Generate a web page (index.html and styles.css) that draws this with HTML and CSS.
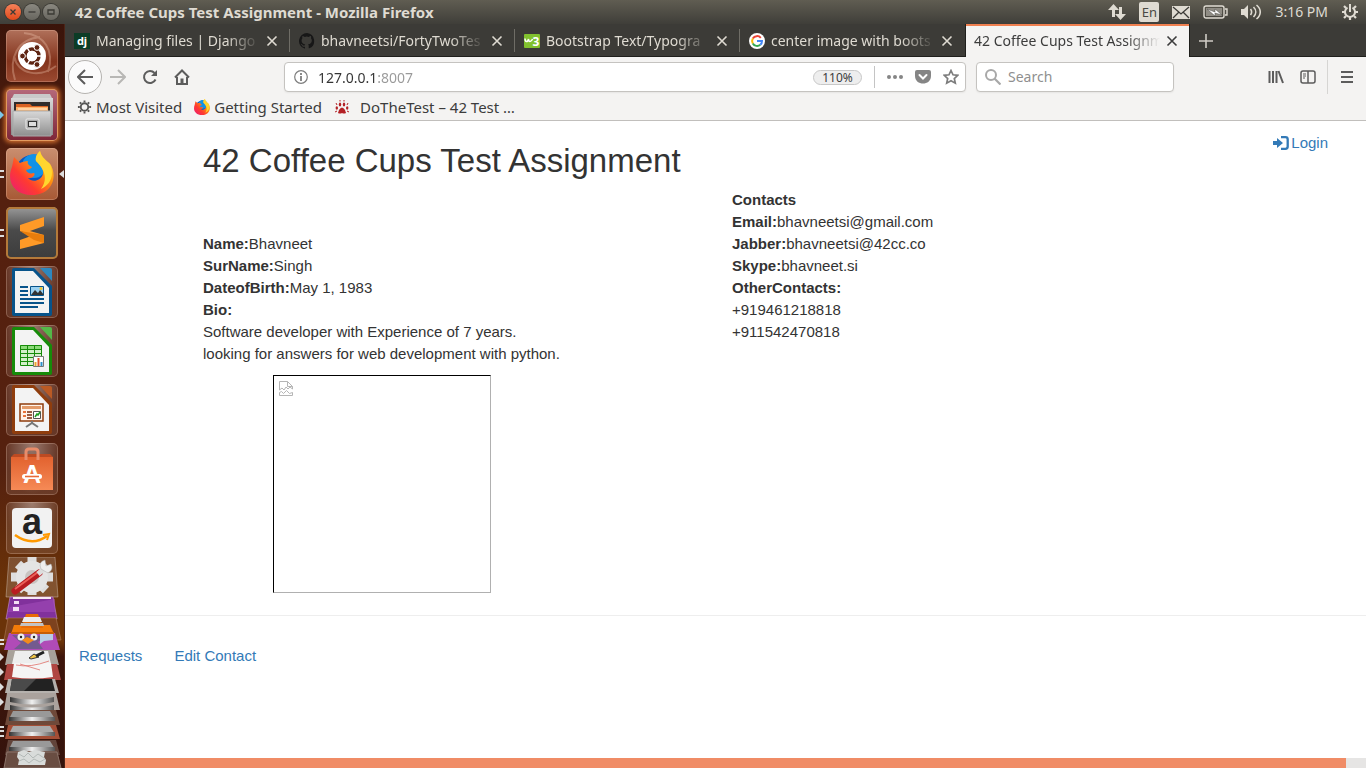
FILE: index.html
```html
<!DOCTYPE html>
<html lang="en">
<head>
<meta charset="utf-8">
<title>42 Coffee Cups Test Assignment</title>
<link rel="stylesheet" href="styles.css">
</head>
<body>
<svg class="defs" aria-hidden="true">
  <defs>
    <linearGradient id="steel" x2="0" y2="1"><stop offset="0" stop-color="#d8d8d8"/><stop offset="1" stop-color="#8e8e8e"/></linearGradient>
    <linearGradient id="drive" x2="1" y2="0"><stop offset="0" stop-color="#333"/><stop offset=".5" stop-color="#f0f0f0"/><stop offset="1" stop-color="#555"/></linearGradient>
    <linearGradient id="fire" x1="0" y1="1" x2="1" y2="0"><stop offset="0" stop-color="#e9187c"/><stop offset=".35" stop-color="#ff3b30"/><stop offset=".65" stop-color="#ff980e"/><stop offset="1" stop-color="#fff44f"/></linearGradient>
    <linearGradient id="bag" x2="0" y2="1"><stop offset="0" stop-color="#e2622f"/><stop offset="1" stop-color="#f68a56"/></linearGradient>
    <symbol id="fox" viewBox="0 0 44 44">
      <circle cx="22" cy="20" r="16" fill="#0a56c0"/><circle cx="24" cy="15" r="12" fill="#1192e8"/>
      <path d="M4 6L10 12C12 11 15 10 18 10 17 12 18 14 22 16 21 18 18 18 16 19 17 22 20 23 24 22 26 24 22 28 18 27 22 32 31 30 33 23 34 17 29 13 26 10 25 6 27 3 30 0 31 6 36 9 40 13 48 24 43 44 22 44 4 44-4 30 2 16Z" fill="url(#fire)"/>
      <path d="M26 10C25 6 27 3 30 0 31 6 36 9 40 13 45 25 40 34 31 38 38 28 35 19 26 10Z" fill="#ffd62e"/>
    </symbol>
    <symbol id="close" viewBox="0 0 12 12"><path d="M1.500 1.500l9 9m0-9l-9 9" fill="none" stroke="currentColor" stroke-width="1.600"/></symbol>
  </defs>
</svg>

<header class="panel">
  <div class="window-buttons">
    <button class="wb wb-close" aria-label="Close window"><svg viewBox="0 0 16 16"><path d="M5.500 5.500l5 5m0-5l-5 5"/></svg></button>
    <button class="wb" aria-label="Minimize"><svg viewBox="0 0 16 16"><path d="M4.500 8h7"/></svg></button>
    <button class="wb" aria-label="Restore"><svg viewBox="0 0 16 16"><path d="M5 6h6v4H5z"/></svg></button>
  </div>
  <div class="window-title">42 Coffee Cups Test Assignment - Mozilla Firefox</div>
  <div class="tray">
    <svg width="18" height="16" viewBox="0 0 18 16"><path d="M5.500 0L0 6h4v7h3V6h4zM12.500 16L18 10h-4V3h-3v7H7z" fill="#dfdbd2"/></svg>
    <span class="lang">En</span>
    <svg width="18" height="13" viewBox="0 0 18 13"><path d="M0 0h18v13H0z" fill="#dfdbd2"/><path d="M1 1l8 7 8-7M1 12l6-6m10 6l-6-6" fill="none" stroke="#3c3b37" stroke-width="1.300"/></svg>
    <svg width="25" height="14" viewBox="0 0 25 14"><rect x="1" y="1" width="20" height="12" rx="2" fill="none" stroke="#dfdbd2" stroke-width="1.400"/><path d="M3 3h16v8H3z" fill="#8f8c84"/><path d="M22 4h2v6h-2" fill="none" stroke="#dfdbd2" stroke-width="1.400"/><path d="M4 4l8 3V4l7 6-7-2v3z" fill="#fff" stroke="#4a4944" stroke-width=".5"/></svg>
    <svg width="21" height="16" viewBox="0 0 21 16"><path d="M0 5h3l4-4v14l-4-4H0z" fill="#dfdbd2"/><path d="M9.500 5c1.500 2 1.500 4 0 6M12.500 3c3 3 3 7 0 10M15.500 1c5 4 5 10 0 14" fill="none" stroke="#dfdbd2" stroke-width="1.600"/></svg>
    <time>3:16 PM</time>
    <svg width="18" height="18" viewBox="0 0 18 18" fill="none" stroke="#dfdbd2"><path d="M6.500 4.600a5 5 0 1 0 5 0" stroke-width="2"/><path d="M9 1v8" stroke-width="2"/><path d="M3 3l2 2M15 3l-2 2M1 9h3m10 0h3M3 15l2-2m10 2l-2-2M9 14v3" stroke-width="2.200"/></svg>
  </div>
</header>

<div class="desktop">
  <nav class="launcher" aria-label="Launcher">
    <button class="tile tile-dash" aria-label="Dash"><svg viewBox="0 0 52 52"><path d="M9 50C2 28 12 9 34 7M50 36C34 48 12 45 8 26M18 3C38 5 49 20 42 42" fill="none" stroke="#efc3ad" stroke-opacity=".35" stroke-width="2"/><circle cx="26" cy="26" r="14" fill="#fff"/><circle cx="26" cy="26" r="7" fill="none" stroke="#5e2412" stroke-width="3.400"/><path d="M26 26H38M26 26L20 15.600M26 26L20 36.400" stroke="#fff" stroke-width="1.500"/><circle cx="26" cy="26" r="5.200" fill="#fff"/><g fill="#5e2412" stroke="#fff"><circle cx="16.500" cy="26" r="2.900"/><circle cx="31" cy="17.500" r="2.900"/><circle cx="31" cy="34.500" r="2.900"/></g></svg></button>
    <button class="tile tile-files" aria-label="Files"><i class="mark mark-blue"></i><svg viewBox="0 0 52 52"><path d="M8 5h36l3 6v35H5V11z" fill="#c9c9c9"/><path d="M5 9h42v37H5z" fill="url(#steel)"/><path d="M8 13h36v10H8z" fill="#302c2b"/><path d="M10 15h14l2 2h16v6H10z" fill="#d96325"/><path d="M10 18h32v5H10z" fill="#ffb36b"/><path d="M12 20h29" stroke="#fff2dd"/><path d="M7 22h38v25H7z" fill="url(#steel)" stroke="#aaa"/><rect x="20" y="30" width="13" height="10" rx="1" fill="#aaa" stroke="#eee"/><rect x="22.500" y="32.500" width="8" height="5" fill="#ddd" stroke="#333"/></svg></button>
    <button class="tile tile-firefox" aria-label="Firefox"><i class="mark mark-pair"></i><i class="mark mark-active"></i><svg viewBox="0 0 52 52"><use href="#fox" x="4" y="3" width="44" height="44"/></svg></button>
    <button class="tile tile-sublime" aria-label="Sublime Text"><i class="mark mark-pair"></i><svg viewBox="0 0 52 52"><path d="M14 18l24-8v9l-14 5 14 4v8l-24 6v-9l14-5-14-4z" fill="#ff9a27"/><path d="M14 24l24 4v8l-10-3z" fill="#e87d0c"/></svg></button>
    <button class="tile" aria-label="Writer"><svg viewBox="0 0 52 52"><path d="M6 4q0-2 2-2h20l18 18v28q0 2-2 2H8q-2 0-2-2z" fill="#07538a"/><path d="M9 5h18l16 17v25H9z" fill="#f3f3f3"/><path d="M34 2h10q2 0 2 2v11z" fill="#2e88be"/><path d="M14 21h8M14 25h8M14 29h8M14 33h24M14 37h24M14 41h18" stroke="#07538a" stroke-width="2"/><path d="M24.500 20.500h13v9h-13z" fill="#9bd1f1" stroke="#07538a"/><path d="M25 29l4-5 3 3 2-3 4 5z" fill="#333"/><circle cx="35" cy="22.500" r="1.500" fill="#f2c52a"/></svg></button>
    <button class="tile" aria-label="Calc"><svg viewBox="0 0 52 52"><path d="M6 4q0-2 2-2h20l18 18v28q0 2-2 2H8q-2 0-2-2z" fill="#168b09"/><path d="M9 5h18l16 17v25H9z" fill="#f3f3f3"/><path d="M34 2h10q2 0 2 2v11z" fill="#54b848"/><path d="M14 20h22v20H14z" fill="#d2efc8"/><path d="M14 20h22v5H14z" fill="#8cdb79"/><path d="M14.500 20.500h21v20h-21zM14 24.500h22M14 28.500h22M14 32.500h22M14 36.500h22M21.500 20v20M28.500 20v20" fill="none" stroke="#168b09"/><path d="M27.500 31.500h10v10h-10z" fill="#fff" stroke="#777"/><path d="M29.500 41v-4" stroke="#eaa72e" stroke-width="2"/><path d="M32.500 41v-8" stroke="#df5026" stroke-width="2"/><path d="M35.500 41v-4" stroke="#2d91cc" stroke-width="2"/></svg></button>
    <button class="tile" aria-label="Impress"><svg viewBox="0 0 52 52"><path d="M6 3q0-2 2-2h20l18 18v29q0 2-2 2H8q-2 0-2-2z" fill="#8f3d0d"/><path d="M9 4h18l16 17v26H9z" fill="#f3f3f3"/><path d="M34 2h10q2 0 2 2v11z" fill="#bb5a24"/><path d="M14 20h23v17H14z" fill="#fff3e9" stroke="#8f3d0d" stroke-width="1.500"/><path d="M16 23.500h19" stroke="#e29a69" stroke-width="3"/><path d="M17 28h3m-3 4h3" stroke="#e77339" stroke-width="2"/><path d="M21 28h5m-5 3h5m-5 3h5" stroke="#762b0b" stroke-width="1.500"/><path d="M27.500 27.500h7v7h-7z" fill="#fff" stroke="#555"/><path d="M29 33l2-3 1 1 2-3" fill="none" stroke="#1b9c22" stroke-width="1.500"/><path d="M26 37v3m-6 3l6-4 6 4" fill="none" stroke="#777" stroke-width="2"/></svg></button>
    <button class="tile" aria-label="Software"><svg viewBox="0 0 52 52"><path d="M5 14h42v33H5z" fill="url(#bag)"/><path d="M5 14l3-3h36l3 3z" fill="#bc4a22"/><path d="M20 17V9q0-3 3-3h6q3 0 3 3v8" fill="none" stroke="#e88c6a" stroke-width="3"/><text x="26" y="40" class="bag-letter">A</text><path d="M18.500 33.500h15" stroke="#fff" stroke-width="5" stroke-linecap="round"/><path d="M19 33.500h14" stroke="#e96b37" stroke-width="1.600"/></svg></button>
    <button class="tile" aria-label="Amazon"><svg viewBox="0 0 52 52"><rect x="6" y="6" width="40" height="40" rx="4" fill="#f2f2f2"/><text x="26" y="32" class="amazon-letter">a</text><path d="M9 33q17 12 32 1" fill="none" stroke="#ff9900" stroke-width="2.600"/><path d="M37 33l6-1-2 6" fill="none" stroke="#ff9900" stroke-width="2"/></svg></button>
    <svg class="stack" viewBox="0 0 65 211" role="img" aria-label="More applications">
      <path d="M9 0h46l3 40H6z" fill="#fff" fill-opacity=".16" stroke="#fff" stroke-opacity=".3"/>
      <g transform="translate(32 20)"><g stroke="#dedede" stroke-width="9"><path d="M0-20V18M-21 0H21M-14-13L14 13M14-13L-14 13"/></g><circle r="16" fill="#e4e4e4"/><circle r="7" fill="#c9c4c2"/></g>
      <path d="M15 34L39 16" stroke="#b81c20" stroke-width="7" stroke-linecap="round"/><path d="M15 32L38 15" stroke="#ec5f58" stroke-width="2"/><path d="M38 17l7-6" stroke="#ddd" stroke-width="5"/><path d="M41 12q-3-7 4-9l1 6 5-2q3 6-3 9z" fill="#eee" stroke="#aaa" stroke-width=".5"/>
      <path d="M10 40h43l4 22H6z" fill="#81319c" stroke="#c893cf" stroke-opacity=".6"/><path d="M13 40h38v2H13z" fill="#f6e9f4"/><path d="M10 50L55 42v13H8z" fill="#a24bb9" fill-opacity=".6"/><path d="M14 44h5v3h-5zm-1 6h6v4h-6z" fill="#f3ddf4"/>
      <path d="M8 61h48l5 22H4z" fill="#7d421e" stroke="#b78764" stroke-opacity=".5"/>
      <path d="M9 76h46l5 17H4z" fill="#b04bb7"/><path d="M12 78l9 8-7 6h29l-5-7 7-6z" fill="#735a8f"/><path d="M40 77h13v6l-9 1-4 3z" fill="#b8cee4"/>
      <path d="M14 68h36l4 9H11z" fill="#f37b09"/><path d="M11 75h43v2H11z" fill="#c75e05"/><path d="M26 57h12l5 14H21z" fill="#e86b07"/><path d="M24 60h16l2 5H22z" fill="#ededed"/><path d="M21 66h22l1 3H20z" fill="#c3c3c3"/>
      <circle cx="21" cy="80" r="3.500" fill="#eee"/><circle cx="34" cy="80" r="3.500" fill="#eee"/><circle cx="21" cy="80" r="1.200" fill="#222"/><circle cx="34" cy="80" r="1.200" fill="#222"/><path d="M22 83l5-3 7 3-6 4z" fill="#f28b1d"/>
      <path d="M8 93h47l4 15H5z" fill="#a8a19a"/><path d="M15 94h33l3 13H12z" fill="#eee"/><path d="M29 101l5-4 5 3-8 2z" fill="#efc446" stroke="#333"/><path d="M36 99l8-4" stroke="#222" stroke-width="3"/>
      <path d="M7 107h50l4 16H4z" fill="#b04642"/><path d="M14 106h37l2 14q-21 3-41 0z" fill="#f5f5f5"/><path d="M16 108q14 3 33-4M20 107l20 6" fill="none" stroke="#e0706a" stroke-width=".8"/>
      <path d="M8 122h47l4 14H5z" fill="#b5b1ad"/><path d="M12 122h40l3 12H10z" fill="#222"/><path d="M12 122h24l-12 12H10z" fill="#4a4a4a"/>
      <path d="M7 136h49l4 17H4z" fill="#aaa29d"/><path d="M10 140q22 5 44 0v5q-22 5-44 0zm0 8q22 5 44 0v5q-22 5-44 0z" fill="url(#drive)"/>
      <path d="M8 153h48l4 15H5z" fill="#6f4939"/><path d="M13 154h37l5 8H9z" fill="#999"/><path d="M9 160h46v4H9z" fill="url(#drive)"/>
      <path d="M8 168h48l4 14H5z" fill="#a44e36"/><path d="M13 169h37l5 8H9z" fill="#aaa"/><path d="M9 175h46v4H9z" fill="url(#drive)"/>
      <path d="M8 183h48l4 15H5z" fill="#62443a"/><path d="M13 184h37l5 8H9z" fill="#999"/><path d="M9 190h46v4H9z" fill="url(#drive)"/>
      <path d="M7 195h50l4 16H4z" fill="#694d42" stroke="#8b746a"/><path d="M18 195l6-2 5 2 6-2 10 2-1 5 2 3-1 5H18l1-5-2-3z" fill="#d9dcda"/><path d="M19 197l5 3 4-4 5 5 5-4 6 4m-25 3l5-2 5 4 5-4 6 3 5-3" fill="none" stroke="#a9b0ad" stroke-width=".8"/>
      <path d="M0 83h4M0 87h4M0 170h4M0 174h4M0 179h4" stroke="#ddd" stroke-width="2"/><path d="M0 96v8l4-4zm0 15v8l4-4zm0 15v8l4-4zm0 15v8l4-4z" fill="#ddd"/>
    </svg>
  </nav>

  <div class="browser">
    <div class="tabs" role="tablist">
      <div class="tab"><svg class="favicon" viewBox="0 0 16 16"><path d="M0 0h16v16H0z" fill="#0c3c26"/><text x="8" y="12" class="fav-dj">dj</text></svg><span class="tab-title">Managing files | Django</span><button class="tab-close" aria-label="Close tab"><svg><use href="#close"/></svg></button></div>
      <div class="tab"><svg class="favicon" viewBox="0 0 16 16"><path fill="#171717" d="M8 0a8 8 0 0 0-2.500 15.600c.4.100.500-.2.500-.4v-1.500c-2 .4-2.700-.5-2.900-1-.1-.3-.5-1-1-1.200-.3-.2-.7-.600 0-.600.600 0 1.100.600 1.300.800.700 1.200 1.900.900 2.300.700.1-.5.300-.9.500-1.100-1.800-.2-3.600-.9-3.600-4 0-.9.300-1.600.8-2.100-.1-.2-.4-1 .1-2.100 0 0 .7-.2 2.200.8a7.500 7.500 0 0 1 4 0c1.500-1 2.200-.8 2.200-.8.400 1.100.200 1.900.1 2.100.5.600.8 1.300.8 2.100 0 3.100-1.900 3.700-3.700 3.900.3.300.6.800.6 1.500v2.200c0 .2.100.5.600.4A8 8 0 0 0 8 0z"/></svg><span class="tab-title">bhavneetsi/FortyTwoTes</span><button class="tab-close" aria-label="Close tab"><svg><use href="#close"/></svg></button></div>
      <div class="tab"><svg class="favicon" viewBox="0 0 16 16"><rect y="1" width="16" height="14" rx="1" fill="#81c12e"/><path d="M1 5.500q0 3 1.500 3T4.500 6q0 2.500 1.500 2.500T8.500 6" fill="none" stroke="#fff" stroke-width="1.500"/><text x="12" y="13" class="fav-w3">3</text></svg><span class="tab-title">Bootstrap Text/Typogra</span><button class="tab-close" aria-label="Close tab"><svg><use href="#close"/></svg></button></div>
      <div class="tab tab-before"><svg class="favicon" viewBox="0 0 16 16"><circle cx="8" cy="8" r="8" fill="#fff"/><g fill="none" stroke-width="2"><path d="M11.800 4.800A5 5 0 0 0 3.800 5.500" stroke="#ea4335"/><path d="M3.800 5.500a5 5 0 0 0 0 5" stroke="#fbbc05"/><path d="M3.800 10.500a5 5 0 0 0 7.500 1.300" stroke="#34a853"/><path d="M8 8h5a5 5 0 0 1-1.700 3.800" stroke="#4285f4"/></g></svg><span class="tab-title">center image with boots</span><button class="tab-close" aria-label="Close tab"><svg><use href="#close"/></svg></button></div>
      <div class="tab tab-current"><span class="tab-title">42 Coffee Cups Test Assignm</span><button class="tab-close" aria-label="Close tab"><svg><use href="#close"/></svg></button></div>
      <button class="new-tab" aria-label="New tab"><svg width="14" height="14" viewBox="0 0 14 14"><path d="M7 0v14M0 7h14" stroke="#cfccc5" stroke-width="1.600"/></svg></button>
    </div>

    <div class="toolbar">
      <button class="tool back" aria-label="Back"><svg viewBox="0 0 16 16"><path d="M16 8H1m7-7L1 8l7 7"/></svg></button>
      <button class="tool forward" aria-label="Forward"><svg viewBox="0 0 16 16"><path d="M0 8h15M8 1l7 7-7 7"/></svg></button>
      <button class="tool" aria-label="Reload"><svg viewBox="0 0 16 16"><path d="M13.500 10.500A6 6 0 1 1 12.500 4"/><path d="M15 1v6H9z" fill="currentColor" stroke="none"/></svg></button>
      <button class="tool" aria-label="Home"><svg viewBox="0 0 16 16"><path d="M1 8.500L8 1.500l7 7M3 8v7h10V8"/><path d="M6.500 9.500h3V15h-3z" fill="currentColor" stroke="none"/></svg></button>
      <div class="urlbar">
        <svg width="14" height="14" viewBox="0 0 14 14" fill="none" stroke="#7d7d7d"><circle cx="7" cy="7" r="6.300" stroke-width="1.200"/><path d="M7 6v5M7 3v2" stroke-width="1.800"/></svg>
        <input class="address" type="text" aria-label="Address" value="127.0.0.1:8007">
        <button class="zoom">110%</button>
        <span class="divider"></span>
        <button class="mini" aria-label="Page actions"><svg width="16" height="16" viewBox="0 0 16 16" fill="#858585"><circle cx="2" cy="8" r="2"/><circle cx="8" cy="8" r="2"/><circle cx="14" cy="8" r="2"/></svg></button>
        <button class="mini" aria-label="Save to Pocket"><svg width="16" height="16" viewBox="0 0 16 16"><path d="M2 1h12q2 0 2 2v4c0 10-16 10-16 0V3q0-2 2-2z" fill="#858585"/><path d="M4.500 6L8 9.500 11.500 6" fill="none" stroke="#fff" stroke-width="2" stroke-linecap="round"/></svg></button>
        <button class="mini" aria-label="Bookmark"><svg width="16" height="16" viewBox="0 0 16 16"><path d="M8 1.500l2 4.300 4.800.5-3.500 3.200 1 4.700L8 11.800l-4.300 2.400 1-4.700L1.200 6.300 6 5.800z" fill="none" stroke="#7d7d7d" stroke-width="1.700"/></svg></button>
      </div>
      <div class="searchbar">
        <svg width="16" height="16" viewBox="0 0 16 16" fill="none" stroke="#a8a8a8"><circle cx="6" cy="6" r="5" stroke-width="2"/><path d="M9.500 9.500L15.500 15.500" stroke-width="2.200"/></svg>
        <input type="search" aria-label="Search" placeholder="Search">
      </div>
      <div class="tools-end">
        <button class="tool" aria-label="Library"><svg viewBox="0 0 16 16"><path d="M1.500 2v12M5 2v12M8.500 2v12M10.500 2l4.500 12"/></svg></button>
        <button class="tool thin" aria-label="Sidebars"><svg viewBox="0 0 16 16"><rect x="1" y="2" width="14" height="12" rx="2"/><path d="M8 2v12"/><path d="M3 5h3M3 7h3M3 9h2" stroke-width="1"/></svg></button>
        <span class="tool-sep"></span>
        <button class="tool" aria-label="Menu"><svg viewBox="0 0 16 16"><path d="M2 3h12M2 8h12M2 13h12"/></svg></button>
      </div>
    </div>

    <div class="bookmarks">
      <a href="#"><svg width="15" height="16" viewBox="0 0 16 16" fill="none" stroke="#555"><circle cx="8" cy="8" r="4" stroke-width="2"/><path d="M8 1v2M8 13v2M1 8h2M13 8h2M3 3l1.500 1.500M11.500 11.500L13 13M13 3l-1.500 1.500M4.500 11.500L3 13" stroke-width="2"/></svg>Most Visited</a>
      <a href="#"><svg width="16" height="16"><use href="#fox"/></svg>Getting Started</a>
      <a href="#" class="paw"><svg width="16" height="16" viewBox="0 0 16 16" fill="#b32025"><path d="M5 11q3-5 6 0l1 3q-2 1-4 0-2 1-4 0z"/><ellipse cx="2.800" cy="9" rx="1.200" ry="1.800"/><ellipse cx="6" cy="5.500" rx="1.200" ry="2"/><ellipse cx="10" cy="5.500" rx="1.200" ry="2"/><ellipse cx="13.200" cy="9" rx="1.200" ry="1.800"/><path d="M2 4l1 2M6 1v1.500M10 1v1.500M14 4l-1 2M1 13l2-1M15 13l-2-1" stroke="#b32025"/></svg>DoTheTest – 42 Test …</a>
    </div>

    <div class="page">
      <header class="page-head">
        <h1>42 Coffee Cups Test Assignment</h1>
        <a href="#" class="login"><svg width="16" height="14" viewBox="0 0 16 14"><path d="M0 5h4V2l6 5-6 5V9H0z" fill="#337ab7"/><path d="M8 1.200h4.500q2.200 0 2.200 2.200v7.200q0 2.200-2.200 2.200H8" fill="none" stroke="#337ab7" stroke-width="2.300"/></svg>Login</a>
      </header>
      <main class="details">
        <section class="person">
          <p><b>Name:</b>Bhavneet</p>
          <p><b>SurName:</b>Singh</p>
          <p><b>DateofBirth:</b>May 1, 1983</p>
          <p><b>Bio:</b></p>
          <p>Software developer with Experience of 7 years.</p>
          <p>looking for answers for web development with python.</p>
          <div class="photo" role="img" aria-label="Photo"><svg width="14" height="16" viewBox="0 0 14 16" fill="none" stroke="#b5b5b5"><path d="M.5 8V.5h8l5 5V8L11 6 9 8 7 6 5 9 3 7 .5 9zM8.500.5v5h5M.5 14.500v-3l2-1 2 2 3-3 3 3 3-1v3z"/></svg></div>
        </section>
        <section class="contacts">
          <p><b>Contacts</b></p>
          <p><b>Email:</b>bhavneetsi@gmail.com</p>
          <p><b>Jabber:</b>bhavneetsi@42cc.co</p>
          <p><b>Skype:</b>bhavneet.si</p>
          <p><b>OtherContacts:</b></p>
          <p>+919461218818</p>
          <p>+911542470818</p>
        </section>
      </main>
      <footer class="page-links"><a href="#">Requests</a><a href="#">Edit Contact</a></footer>
    </div>
    <div class="scrollbar"><div class="thumb"></div></div>
  </div>
</div>
</body>
</html>
```
FILE: styles.css
```css
* { box-sizing: border-box; }
body {
  margin: 0;
  height: 100vh;
  display: flex;
  flex-direction: column;
  overflow: hidden;
  font: 14px/20px "Noto Sans", sans-serif;
  color: #3c3c3c;
}
button, input { font: inherit; color: inherit; border: 0; padding: 0; margin: 0; background: none; }
svg { display: block; flex: none; }
p, h1 { margin: 0; }
a { text-decoration: none; }
.defs { position: absolute; width: 0; height: 0; }

/* top panel */
.panel {
  flex: none;
  height: 24px;
  display: flex;
  align-items: center;
  padding: 0 7px 0 5px;
  background: linear-gradient(#605d52, #3f3e39);
  color: #dfdbd2;
}
.window-buttons { display: flex; gap: 3px; width: 70px; }
.wb { width: 16px; height: 16px; border-radius: 50%; background: linear-gradient(#8a8880, #68665f); box-shadow: 0 0 0 1px #3b3a35; }
.wb svg { fill: none; stroke: #3b3a35; stroke-width: 1.3; }
.wb-close { background: linear-gradient(#f58159, #e1491b); }
.window-title { flex: 1; font-size: 15px; font-weight: 700; }
.tray { display: flex; align-items: center; gap: 13px; }
.lang { width: 20px; height: 20px; border-radius: 2px; background: #dfdbd2; color: #4a4944; text-align: center; font-size: 13px; }

.desktop { flex: 1; display: flex; min-height: 0; }

/* launcher */
.launcher {
  flex: none;
  width: 65px;
  padding-top: 6px;
  overflow: hidden;
  border-right: 1px solid #4b2417;
  background: linear-gradient(#3a140a, #55200f 20%, #55210f 60%, #6b3308 76%, #6b3308 83%, #3e150b 85%, #34130c);
}
.tile {
  display: block;
  position: relative;
  width: 52px;
  height: 52px;
  margin: 0 0 7px 6px;
  border-radius: 5px;
  box-shadow: inset 0 0 0 1px rgba(255, 220, 200, .25);
  background: radial-gradient(ellipse at 50% 0, rgba(255, 255, 255, .4), rgba(255, 255, 255, .1) 70%);
}
.tile-dash { background: linear-gradient(#b0705a, #83331c 60%, #9b4a31); }
.tile-files { background: linear-gradient(#b5697a, #7d2638); box-shadow: inset 0 0 0 1px #e29a5e, 0 0 4px 2px #c8692c; }
.tile-firefox { background: linear-gradient(#c98e6f, #a75935); }
.tile-sublime { background: linear-gradient(#9a9a9a, #4a4a4a 45%, #3c3c3c); box-shadow: inset 0 0 0 2px #b47a3a; }
.mark { position: absolute; left: -6px; top: 22px; width: 4px; height: 8px; }
.mark-blue { background: #7cc7e8; clip-path: polygon(0 0, 100% 50%, 0 100%); }
.mark-pair { border: solid #ddd; border-width: 2px 0; }
.mark-active { left: 53px; width: 5px; background: #ddd; clip-path: polygon(100% 0, 0 50%, 100% 100%); }
.bag-letter { font: 700 25px "Liberation Sans", sans-serif; fill: #fff; text-anchor: middle; }
.amazon-letter { font: 700 36px "Liberation Sans", sans-serif; fill: #222; text-anchor: middle; }
.stack { width: 65px; height: 211px; margin-top: -4px; }

/* browser */
.browser { flex: 1; min-width: 0; display: flex; flex-direction: column; background: #fff; }
.tabs { flex: none; height: 33px; display: flex; background: #3c3b37; color: #dfdbd2; box-shadow: inset 0 -1px #1f1f1c; }
.tab { position: relative; flex: 0 1 225px; min-width: 0; display: flex; align-items: center; gap: 6px; padding: 0 12px 0 9px; }
.tab::after { content: ""; position: absolute; right: 0; top: 5px; width: 1px; height: 23px; background: #6f6d66; }
.tab-before::after, .tab-current::after { display: none; }
.tab-current { background: #f4f3f2; color: #3c3c3c; border: solid #1f1f1c; border-width: 0 1px; box-shadow: inset 0 2px #f08050; padding: 0 11px 0 8px; }
.favicon { width: 16px; height: 16px; }
.fav-dj { font: 700 11px "Noto Sans", sans-serif; fill: #fff; text-anchor: middle; }
.fav-w3 { font: 700 12px "Noto Sans", sans-serif; fill: #fff; text-anchor: middle; }
.tab-title { flex: 1; min-width: 0; overflow: hidden; white-space: nowrap; mask-image: linear-gradient(90deg, #000 calc(100% - 34px), transparent); }
.tab-close svg { width: 12px; height: 12px; }
.new-tab { padding: 0 9px; }

.toolbar { flex: none; height: 40px; display: flex; align-items: center; padding: 0 3px; background: #f4f3f2; }
.tool { flex: none; width: 32px; height: 34px; color: #5c5c5c; display: flex; align-items: center; justify-content: center; }
.tool svg { width: 16px; height: 16px; fill: none; stroke: currentColor; stroke-width: 2; }
.thin svg { stroke-width: 1.5; }
.back { width: 34px; border: 1px solid #b5b3b0; border-radius: 50%; background: #fbfbfb; }
.forward { color: #b8b7b5; }
.urlbar, .searchbar { height: 30px; display: flex; align-items: center; background: #fff; border: 1px solid #c5c3c0; border-radius: 4px; box-shadow: 0 1px 2px rgba(0, 0, 0, .06); }
.urlbar { flex: 1; margin: 0 10px 0 86px; padding: 0 6px 0 9px; gap: 12px; }
.address {
  flex: 1;
  min-width: 0;
  height: 28px;
  margin-left: -2px;
  background: linear-gradient(90deg, #333 59px, #999 59px);
  background-clip: text;
  color: transparent;
}
.zoom { width: 49px; height: 15px; line-height: 13px; font-size: 12px; border: 1px solid #c8c8c8; border-radius: 8px; background: #eee; }
.divider { width: 1px; height: 22px; background: #c4c4c4; }
.searchbar { width: 198px; padding: 0 8px; gap: 7px; }
.searchbar input { flex: 1; min-width: 0; appearance: none; }
.searchbar input::placeholder { color: #8f8f8f; }
.tools-end { display: flex; margin-left: 86px; }
.tool-sep { width: 1px; margin: 0 3px; background: #d6d5d3; }

.bookmarks { flex: none; height: 24px; display: flex; align-items: center; gap: 12px; padding: 0 12px 3px; background: #f4f3f2; border-bottom: 1px solid #c1bfbc; font-size: 15px; }
.bookmarks a { display: flex; align-items: center; gap: 4px; color: #3c3c3c; }
.bookmarks .paw { gap: 10px; }

/* page */
.page { flex: 1; min-height: 0; overflow: hidden; padding-top: 22px; font: 15px/22px "Liberation Sans", Arial, sans-serif; color: #333; }
.page-head { display: flex; justify-content: space-between; align-items: flex-start; padding: 0 38px 10px 138px; }
h1 { font-size: 33px; line-height: 36px; font-weight: 400; }
.page a { color: #337ab7; }
.login { display: flex; align-items: center; gap: 2px; margin-top: -11px; }
.details { display: grid; grid-template-columns: 529fr 634fr; padding: 0 0 22px 138px; border-bottom: 1px solid #eee; }
.person { padding-top: 44px; }
.photo { width: 218px; height: 218px; margin: 10px 0 0 70px; padding: 5px; border: 1px solid; border-color: #000 #b0b0b0 #b0b0b0 #000; }
.page-links { display: flex; gap: 32px; padding: 29px 14px; }

.scrollbar { flex: none; height: 10px; background: #e6e5e4; padding-right: 20px; }
.thumb { height: 100%; background: #f08c66; }
```
